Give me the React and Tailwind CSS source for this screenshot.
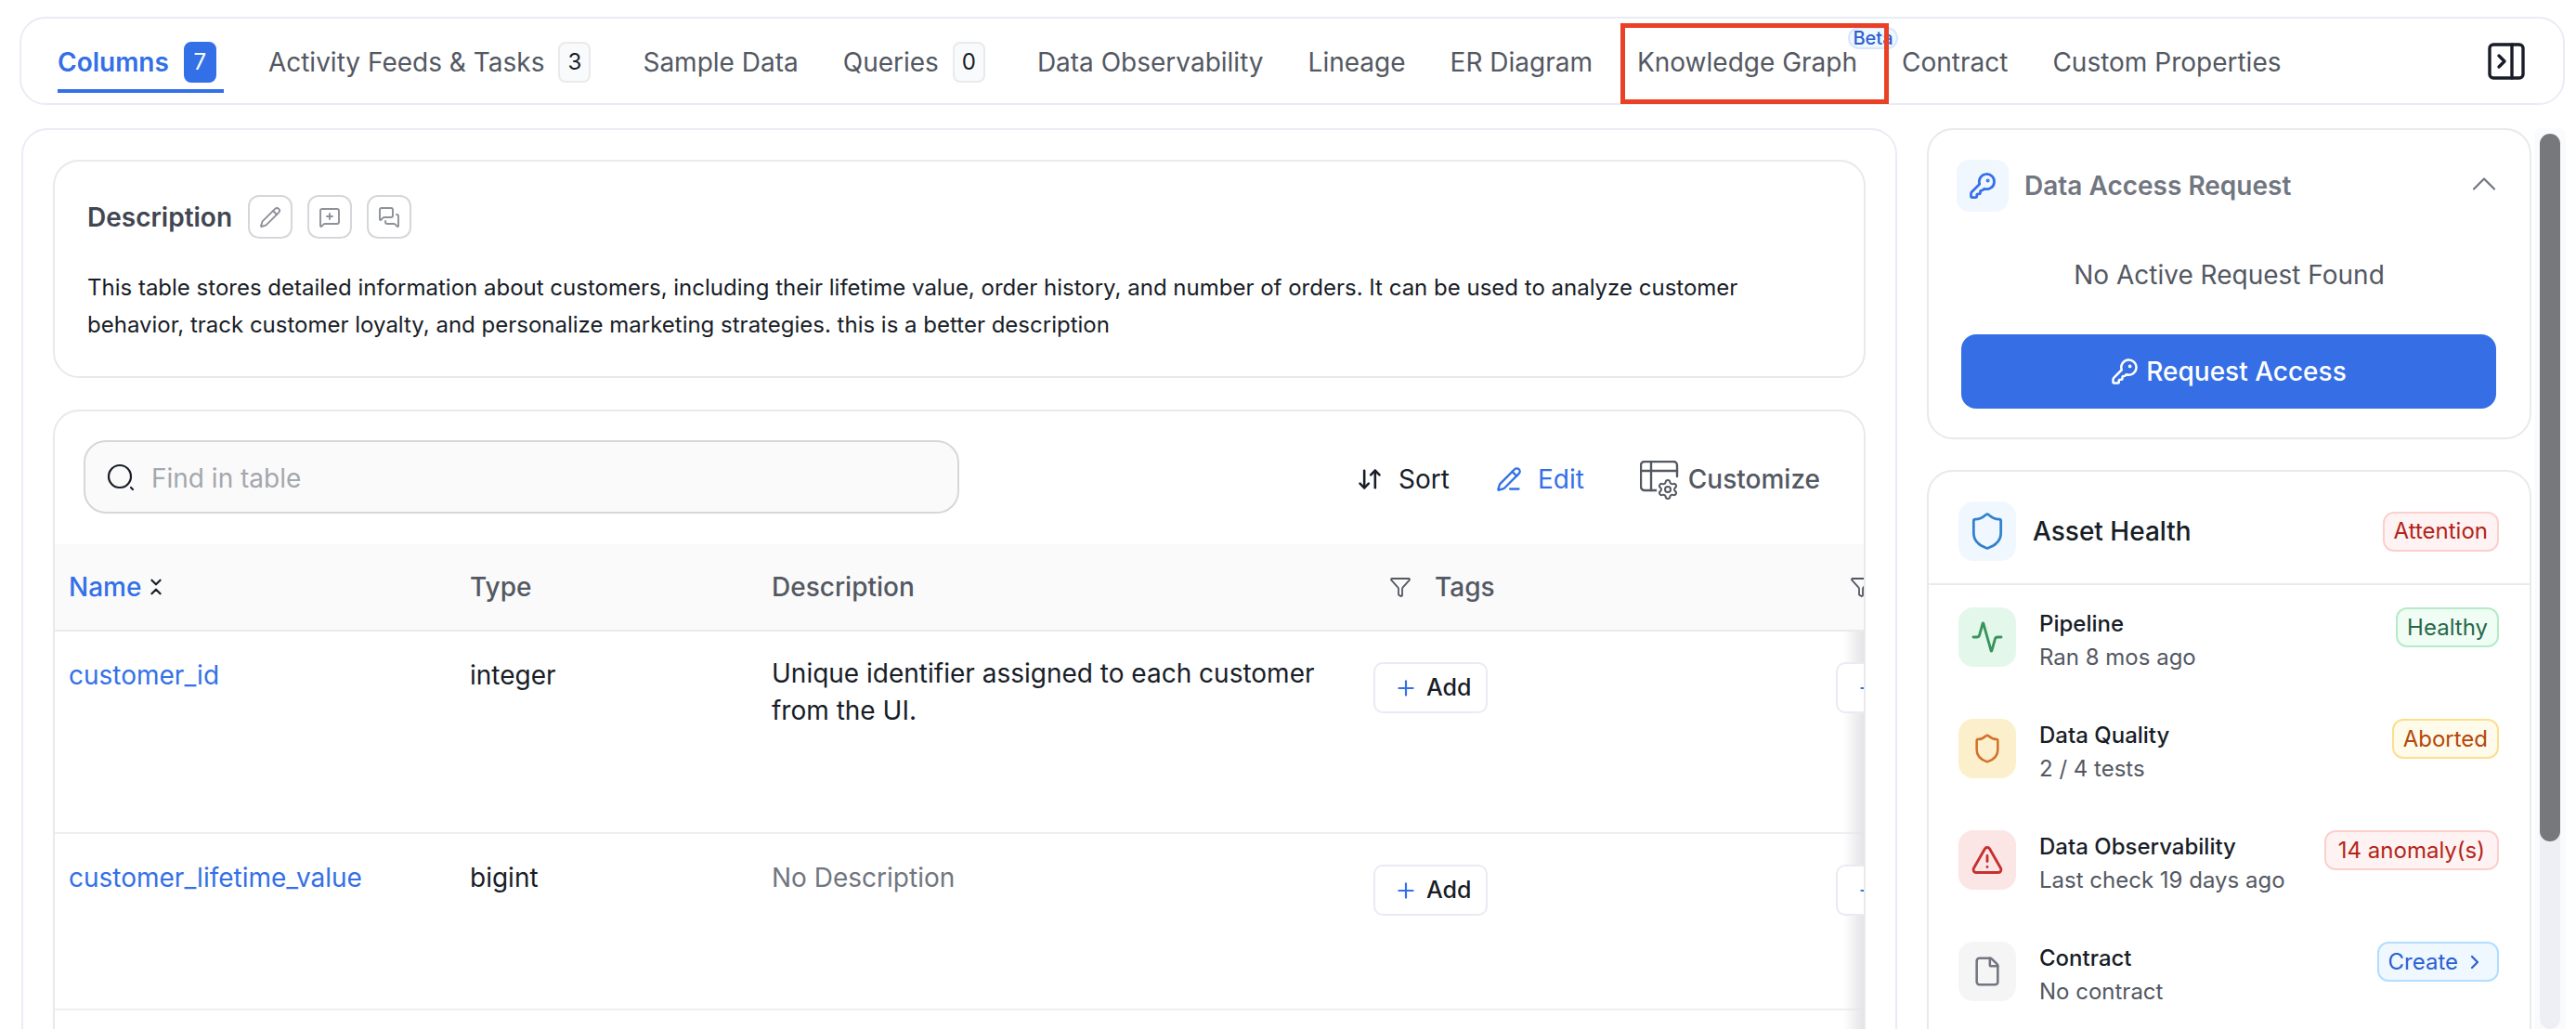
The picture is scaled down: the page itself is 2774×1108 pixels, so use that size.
import {
  Activity,
  ArrowDownUp,
  ChevronRight,
  ChevronUp,
  ChevronsDownUp,
  File,
  Filter,
  KeyRound,
  MessageSquarePlus,
  MessagesSquare,
  Pencil,
  PencilLine,
  PanelRightClose,
  Plus,
  Settings,
  Shield,
  TriangleAlert,
} from "lucide-react";

const tabs = [
  { label: "Columns", count: "7", active: true },
  { label: "Activity Feeds & Tasks", count: "3" },
  { label: "Sample Data" },
  { label: "Queries", count: "0" },
  { label: "Data Observability" },
  { label: "Lineage" },
  { label: "ER Diagram" },
  { label: "Knowledge Graph", beta: true },
  { label: "Contract" },
  { label: "Custom Properties" },
];

const rows = [
  {
    name: "customer_id",
    type: "integer",
    description: "Unique identifier assigned to each customer from the UI.",
    height: "h-[218px]",
  },
  {
    name: "customer_lifetime_value",
    type: "bigint",
    height: "h-[190px]",
  },
];

const healthItems = [
  {
    title: "Pipeline",
    sub: "Ran 8 mos ago",
    box: "bg-[#e3f8ea]",
    icon: <Activity size={36} strokeWidth={1.9} className="text-[#38935c]" />,
    badge: "Healthy",
    badgeClass: "px-[10px] bg-[#f0fdf4] border-[#b4ebc8] text-[#276749]",
  },
  {
    title: "Data Quality",
    sub: "2 / 4 tests",
    box: "bg-[#fcf0cc]",
    icon: <Shield size={34} strokeWidth={1.8} className="text-[#d4702a]" />,
    badge: "Aborted",
    badgeClass: "px-[10px] bg-[#fffbeb] border-[#fbdf8f] text-[#b54708]",
  },
  {
    title: "Data Observability",
    sub: "Last check 19 days ago",
    box: "bg-[#fbe5e5]",
    icon: <TriangleAlert size={36} strokeWidth={1.9} className="text-[#c53030]" />,
    badge: "14 anomaly(s)",
    badgeClass: "px-[13px] bg-[#fef3f2] border-[#fbd0cc] text-[#b42318]",
  },
  {
    title: "Contract",
    sub: "No contract",
    box: "bg-[#f5f5f5]",
    icon: <File size={34} strokeWidth={1.8} className="text-[#717680]" />,
    badge: "Create",
    badgeClass: "px-[10px] bg-[#eff8ff] border-[#b2ddff] text-[#2d5fd3]",
    chevron: true,
  },
];

function Tab({ tab }) {
  return (
    <div
      className={`relative flex h-[73px] items-start pt-[18px] ${
        tab.active ? "border-b-4 border-[#3370e8] font-semibold text-[#3370e8]" : "border-b-4 border-transparent text-[#535862]"
      }`}
    >
      <span className="leading-[44px]">{tab.label}</span>
      {tab.count && (
        <span
          className={`mr-[8px] flex h-[44px] w-[35px] items-center justify-center rounded-[8px] border-2 text-[24px] font-normal ${
            tab.active ? "ml-[16px] border-[#3370e8] bg-[#3370e8] font-medium text-white" : "ml-[15px] border-[#e9eaeb] bg-[#f9fafb] text-[#181d27]"
          }`}
        >
          {tab.count}
        </span>
      )}
      {tab.beta && (
        <>
          <span className="absolute left-[227px] top-[2px] flex h-[24px] w-[54px] items-center justify-center rounded-full border-2 border-[#d6e6ff] bg-[#eff8ff] text-[20px] font-medium text-[#2d5fd3]">
            Beta
          </span>
          <span className="absolute left-[-18px] top-[-2px] h-[87px] w-[289px] border-[5px] border-[#ea4025]" />
        </>
      )}
    </div>
  );
}

function IconButton({ children }) {
  return (
    <button className="flex h-[47px] w-[48px] items-center justify-center rounded-[12px] border-2 border-[#d5d7da] text-[#8f9198]">
      {children}
    </button>
  );
}

function AddButton() {
  return (
    <button className="relative z-10 flex h-[55px] w-[123px] shrink-0 items-center rounded-[10px] border-2 border-[#e9ebf3] bg-white pl-[20px] text-[25px] font-medium text-[#181d27]">
      <Plus size={26} strokeWidth={2} className="text-[#3370e8]" />
      <span className="ml-[9px]">Add</span>
    </button>
  );
}

function CustomizeIcon() {
  return (
    <span className="relative block h-[40px] w-[42px] shrink-0">
      <svg width="42" height="40" viewBox="0 0 42 40" fill="none" stroke="#535862" strokeWidth="2.4" strokeLinecap="round" strokeLinejoin="round">
        <path d="M19 32H5a4 4 0 0 1-4-4V5a4 4 0 0 1 4-4h31a4 4 0 0 1 4 4v12" />
        <path d="M1 11h39M12 1v31" />
      </svg>
      <span className="absolute bottom-[-3px] right-0 rounded-full bg-white">
        <Settings size={24} strokeWidth={2} className="text-[#535862]" />
      </span>
    </span>
  );
}

function SearchIcon() {
  return (
    <svg width="30" height="30" viewBox="0 0 30 30" fill="none" stroke="#181d27" strokeWidth="2.2" strokeLinecap="round" className="shrink-0">
      <circle cx="14" cy="14" r="12" />
      <path d="m26 26 2 2" />
    </svg>
  );
}

function Badge({ item }) {
  return (
    <span className={`flex h-[43px] items-center rounded-[12px] border-2 text-[24px] leading-none ${item.badgeClass}`}>
      {item.badge}
      {item.chevron && <ChevronRight size={24} strokeWidth={2.2} className="ml-[6px] mr-[2px]" />}
    </span>
  );
}

export default function App() {
  return (
    <div className="h-[1108px] w-[2774px] overflow-hidden bg-white pl-[21px] pt-[18px] text-[28px] text-[#181d27] [font-family:Inter,sans-serif]">
      <div className="flex h-[95px] w-[2741px] items-start justify-between rounded-[28px] border-2 border-[#eaecf5] pl-[39px] pr-[37px] pt-[7px]">
        <div className="flex gap-[48px]">
          {tabs.map((tab) => (
            <Tab key={tab.label} tab={tab} />
          ))}
        </div>
        <PanelRightClose size={48} strokeWidth={1.7} className="mt-[15px] text-[#181d27]" />
      </div>

      <div className="mt-[25px] flex h-[970px] items-start">
        <main className="ml-[2px] h-[1000px] w-[2020px] shrink-0 rounded-[28px] border-2 border-[#eaecf5] p-[32px]">
          <section className="h-[235px] rounded-[28px] border-2 border-[#e9e9eb] pl-[35px] pr-[30px] pt-[36px]">
            <div className="flex items-center">
              <h2 className="mr-[17px] font-semibold text-[#414651]">Description</h2>
              <div className="flex gap-[16px]">
                <IconButton>
                  <Pencil size={24} strokeWidth={1.9} />
                </IconButton>
                <IconButton>
                  <MessageSquarePlus size={24} strokeWidth={1.9} />
                </IconButton>
                <IconButton>
                  <MessagesSquare size={24} strokeWidth={1.9} />
                </IconButton>
              </div>
            </div>
            <p className="mt-[33px] text-[24px] leading-[40px] text-[#181d27]">
              This table stores detailed information about customers, including their lifetime value, order history, and number of orders. It can be used to analyze customer behavior, track customer loyalty, and personalize marketing strategies. this is a better description
            </p>
          </section>

          <section className="relative mt-[34px] h-[700px] overflow-hidden rounded-[28px] border-2 border-[#e9e9eb]">
            <div className="flex h-[143px] items-start pl-[31px] pt-[31px]">
              <div className="flex h-[79px] w-[943px] items-center rounded-[24px] border-2 border-[#d5d7da] bg-[#fafafa] pl-[23px]">
                <SearchIcon />
                <span className="ml-[18px] pt-[2px] text-[#a4a7ae]">Find in table</span>
              </div>
              <div className="ml-[428px] mt-[2px] flex h-[79px] items-center">
                <ArrowDownUp size={28} strokeWidth={2.2} className="text-[#181d27]" />
                <span className="ml-[17px]">Sort</span>
                <PencilLine size={28} strokeWidth={2} className="ml-[50px] text-[#3370e8]" />
                <span className="ml-[17px] text-[#3370e8]">Edit</span>
                <span className="ml-[60px]">
                  <CustomizeIcon />
                </span>
                <span className="ml-[10px] font-medium text-[#535862]">Customize</span>
              </div>
            </div>

            <div className="grid h-[94px] grid-cols-[432px_324px_649px_498px_100px] items-center border-b-2 border-[#e9eaeb] bg-[#fafafa] font-medium text-[#535862]">
              <div className="flex items-center pl-[15px] text-[#3370e8]">
                Name
                <ChevronsDownUp size={22} strokeWidth={2.4} className="ml-[5px] text-[#181d27]" />
              </div>
              <div className="pl-[15px]">Type</div>
              <div className="pl-[16px]">Description</div>
              <div className="flex items-center pl-[32px]">
                <Filter size={24} strokeWidth={1.8} />
                <span className="ml-[25px]">Tags</span>
              </div>
              <div className="pl-[30px]">
                <Filter size={24} strokeWidth={1.8} />
              </div>
            </div>

            {rows.map((row) => (
              <div key={row.name} className={`grid grid-cols-[432px_324px_649px_498px_100px] border-b-2 border-[#eeeff2] pt-[25px] ${row.height}`}>
                <div className="pl-[15px] pt-[2px] leading-[40px] text-[#3370e8]">{row.name}</div>
                <div className="pl-[15px] pt-[2px] leading-[40px]">{row.type}</div>
                <div className={`pl-[16px] pr-[30px] leading-[40px] ${row.description ? "" : "pt-[2px] text-[#717680]"}`}>
                  {row.description || "No Description"}
                </div>
                <div className="pl-[15px] pt-[8px]">
                  <AddButton />
                </div>
                <div className="pl-[15px] pt-[8px]">
                  <AddButton />
                </div>
              </div>
            ))}

            <div className="absolute bottom-0 right-0 top-[237px] w-[22px] bg-gradient-to-r from-transparent to-[#e4e4e7]" />
          </section>
        </main>

        <aside className="ml-[32px] flex w-[651px] shrink-0 flex-col gap-[33px]">
          <section className="h-[335px] rounded-[28px] border-2 border-[#e9e9eb] px-[35px] pt-[32px]">
            <div className="ml-[-5px] flex items-center">
              <span className="flex h-[56px] w-[56px] items-center justify-center rounded-[14px] bg-[#f1f7ff]">
                <KeyRound size={30} strokeWidth={2.2} className="text-[#3370e8]" />
              </span>
              <span className="ml-[17px] font-semibold text-[#717680]">Data Access Request</span>
              <ChevronUp size={44} strokeWidth={1.2} className="ml-auto mr-[-8px] mt-[-4px] text-[#717680]" />
            </div>
            <p className="mt-[47px] text-center text-[#535862]">No Active Request Found</p>
            <button className="mt-[43px] flex h-[80px] w-[576px] items-center justify-center rounded-[16px] bg-[#356ee5] font-medium text-white">
              <KeyRound size={30} strokeWidth={2} />
              <span className="ml-[8px]">Request Access</span>
            </button>
          </section>

          <section className="h-[700px] rounded-[28px] border-2 border-[#e9e9eb]">
            <div className="flex h-[122px] items-center border-b-2 border-[#e9eaeb] pl-[32px] pr-[33px] pt-[8px]">
              <span className="flex h-[64px] w-[62px] items-center justify-center rounded-[16px] bg-[#f1f7ff]">
                <Shield size={44} strokeWidth={1.5} className="text-[#3182ce]" />
              </span>
              <span className="ml-[18px] font-medium">Asset Health</span>
              <span className="ml-auto flex h-[43px] items-center rounded-[12px] border-2 border-[#fbd0cc] bg-[#fef3f2] px-[10px] text-[24px] text-[#b42318]">
                Attention
              </span>
            </div>
            <div className="flex flex-col gap-[56px] pl-[32px] pr-[33px] pt-[24px]">
              {healthItems.map((item) => (
                <div key={item.title} className="flex h-[64px] items-start">
                  <span className={`flex h-[64px] w-[62px] shrink-0 items-center justify-center rounded-[16px] ${item.box}`}>{item.icon}</span>
                  <div className="ml-[25px] text-[24px] leading-[36px]">
                    <div className="font-medium">{item.title}</div>
                    <div className="text-[#535862]">{item.sub}</div>
                  </div>
                  <span className="ml-auto">
                    <Badge item={item} />
                  </span>
                </div>
              ))}
            </div>
          </section>
        </aside>

        <div className="ml-[3px] h-[970px] w-[34px] shrink-0 rounded-t-[8px] bg-[#fafbfd] px-[6px] pt-[6px]">
          <div className="h-full rounded-full bg-[#eeeff5]">
            <div className="h-[762px] rounded-full bg-[#77787b]" />
          </div>
        </div>
      </div>
    </div>
  );
}
